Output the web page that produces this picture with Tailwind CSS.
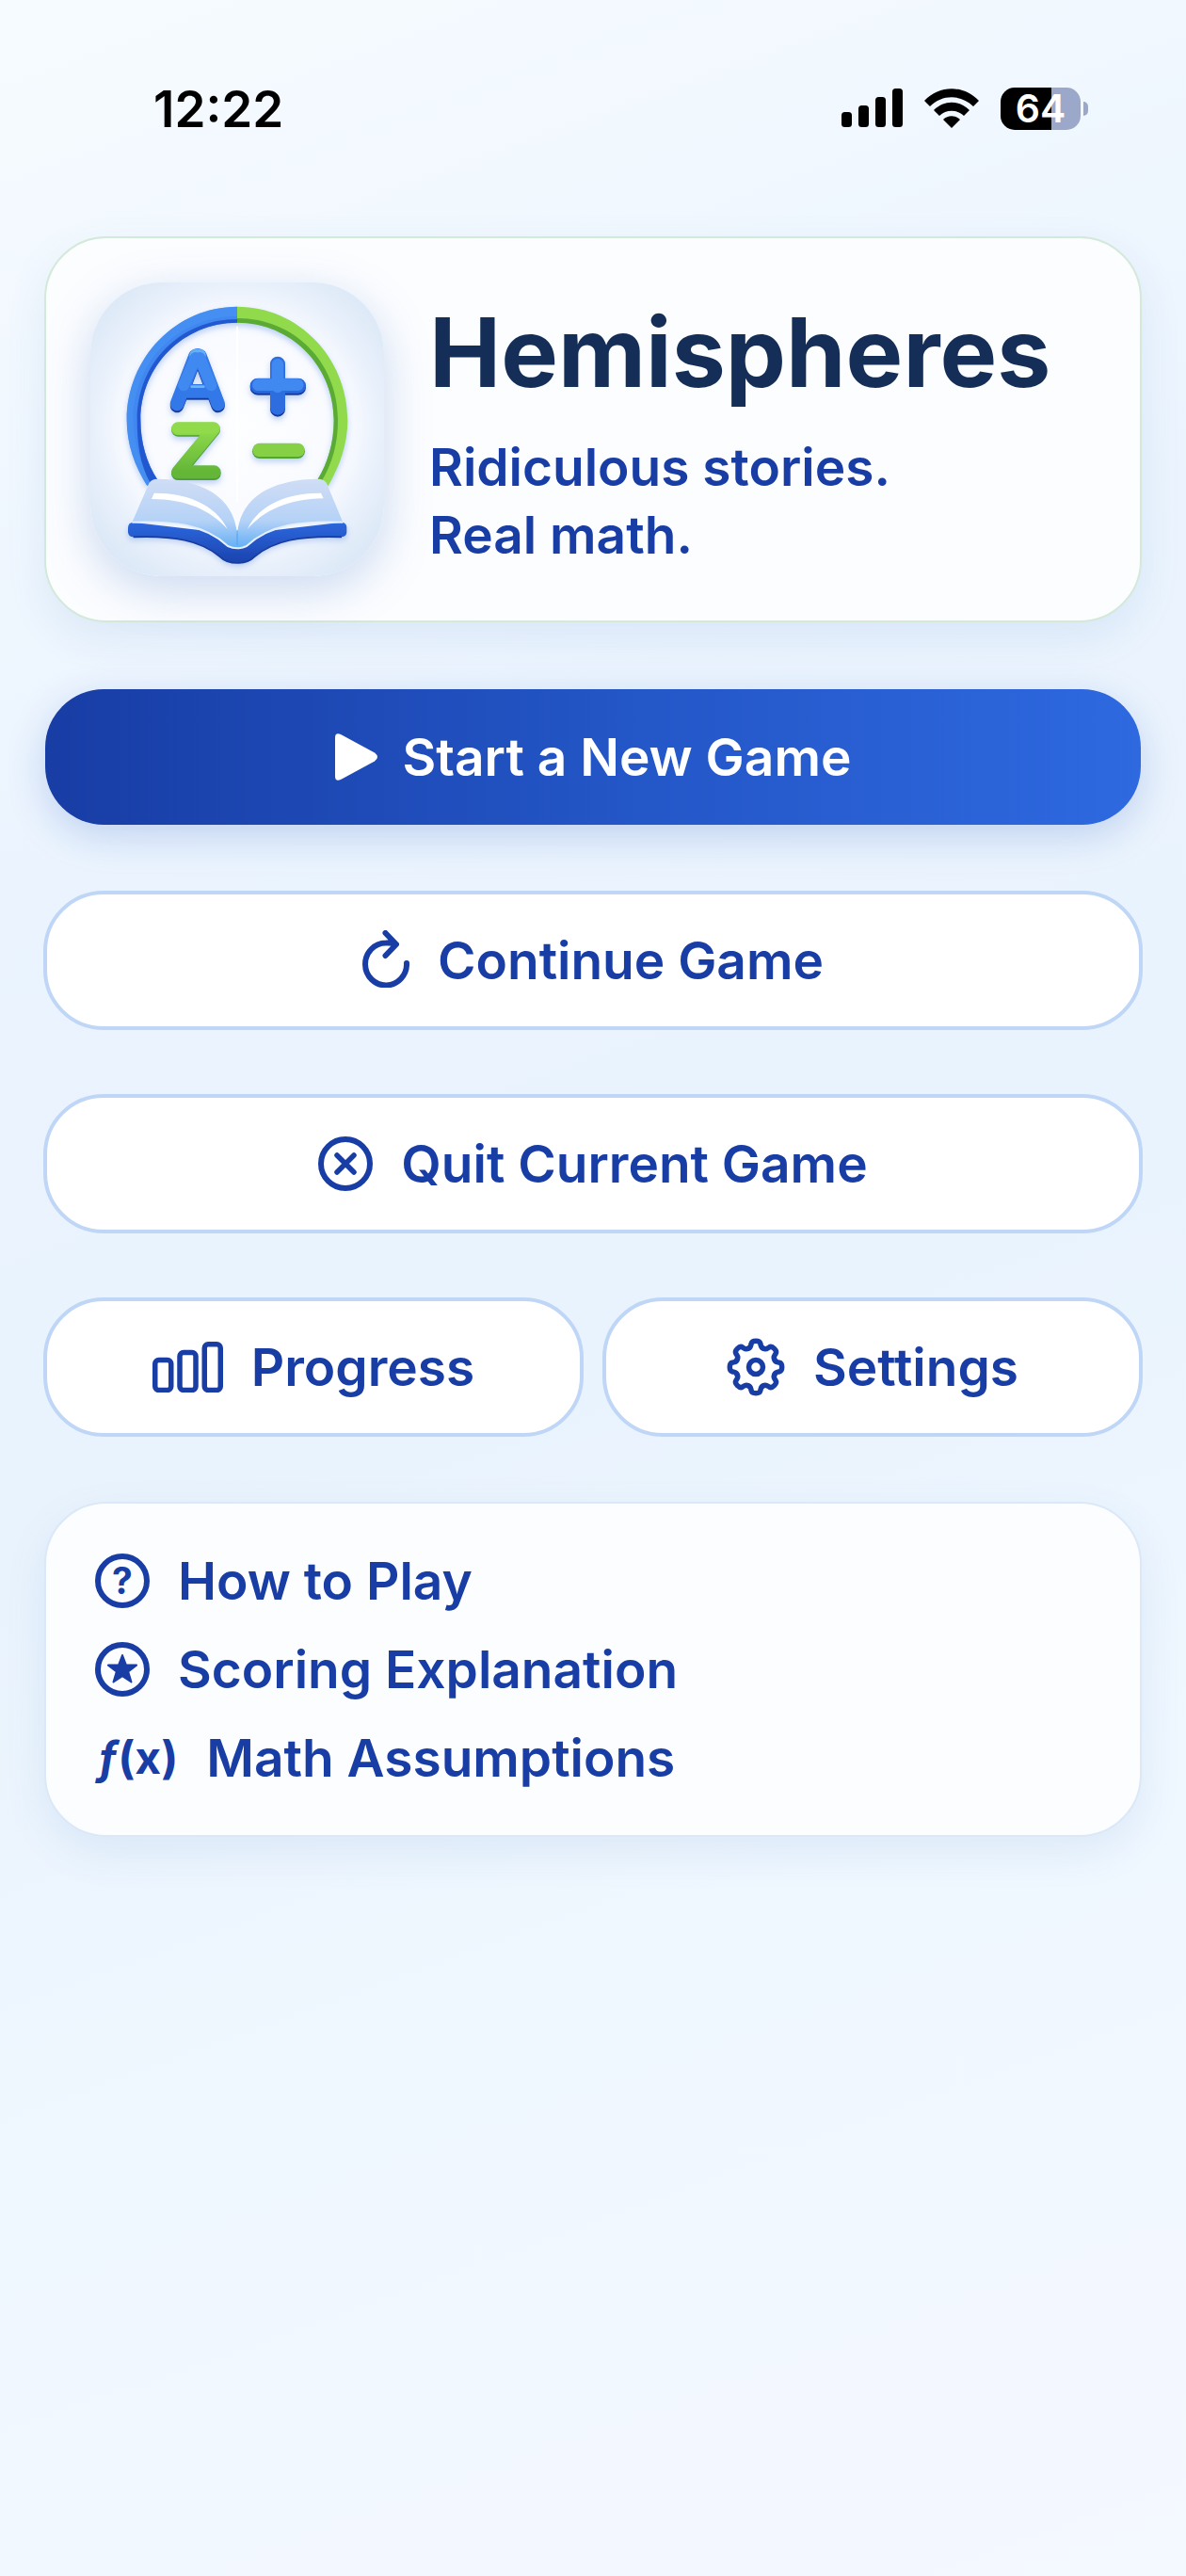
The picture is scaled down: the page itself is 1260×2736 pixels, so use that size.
<!DOCTYPE html>
<html lang="en">

<head>
    <meta charset="UTF-8">
    <meta name="viewport" content="width=device-width, initial-scale=1.0">
    <title>Hemispheres</title>
    <script src="https://cdn.jsdelivr.net/npm/@tailwindcss/browser@4"></script>
</head>

<body class="min-h-screen bg-linear-[160deg,#f6fbff,#ebf4fe_30%,#e9f3fd_52%,#eff7ff_72%,#f4f8ff] font-['Inter',sans-serif] font-semibold text-[#183da5]">

    <!-- Status bar -->
    <header class="flex h-[229px] items-start justify-between pt-[84px] pr-[104px] pl-[163px] text-black">
        <time class="text-[53px] leading-[64px]">12:22</time>
        <div class="flex h-[62px] items-center gap-[23px]">
            <svg class="h-[42px] w-[65px]" viewBox="0 0 65 42" aria-label="Signal">
                <rect x="0" y="25" width="11" height="16" rx="3.5" />
                <rect x="18" y="18" width="11" height="23" rx="3.5" />
                <rect x="36" y="9" width="11" height="32" rx="3.5" />
                <rect x="54" y="0" width="11" height="41" rx="3.5" />
            </svg>
            <svg class="h-[42px] w-[58px]" viewBox="0 0 58 42" aria-label="Wi-Fi">
                <path d="M0 13C16-4 42-4 58 13L52 19C39 6 19 6 6 19Z" />
                <path d="M10 23C21 12 37 12 48 23L42 29C35 22 23 22 16 29Z" />
                <path d="M20 33C25 28 33 28 38 33L29 42Z" />
            </svg>
            <div class="flex items-center gap-[3px]">
                <div class="flex h-[45px] w-[85px] items-center justify-center rounded-[15px] bg-linear-[90deg,#000_64%,#9ba8c9_64%] text-[41px] leading-[45px] text-white">64</div>
                <div class="h-[15px] w-[5px] rounded-r-full bg-[#9ba8c9]"></div>
            </div>
        </div>
    </header>

    <main class="flex flex-col gap-[68px] px-[46px] pt-[22px]">

        <!-- Title card -->
        <section class="mx-px mb-[3px] flex items-center gap-[48px] rounded-[66px] border-2 border-[#d3e9da] bg-[#fcfdff] px-[47px] py-[47px] shadow-[0_16px_44px_rgba(60,120,190,0.1)]">
            <svg class="size-[312px] shrink-0 rounded-[76px] shadow-[0_14px_50px_rgba(90,135,205,0.3)]" viewBox="47 60 936 936" role="img" aria-label="Hemispheres logo">
                <defs>
                    <radialGradient id="tile" cx="0.5" cy="0.49" r="0.66">
                        <stop offset="0" stop-color="#fdfeff" />
                        <stop offset="0.58" stop-color="#f8faff" />
                        <stop offset="0.74" stop-color="#e8f0fb" />
                        <stop offset="1" stop-color="#d7e5f5" />
                    </radialGradient>
                    <linearGradient id="green" x1="0" y1="0" x2="0" y2="1">
                        <stop offset="0" stop-color="#90da4b" />
                        <stop offset="1" stop-color="#64b638" />
                    </linearGradient>
                    <linearGradient id="page" x1="0" y1="0" x2="0" y2="1">
                        <stop offset="0" stop-color="#d0ddf5" />
                        <stop offset="0.6" stop-color="#b5d2f7" />
                        <stop offset="1" stop-color="#62aef5" />
                    </linearGradient>
                    <linearGradient id="cover" x1="0" y1="0" x2="0" y2="1">
                        <stop offset="0" stop-color="#2c68de" />
                        <stop offset="1" stop-color="#1b43ae" />
                    </linearGradient>
                    <filter id="soft" x="-20%" y="-20%" width="140%" height="150%">
                        <feDropShadow dx="0" dy="10" stdDeviation="9" flood-color="#7ba3e6" flood-opacity="0.5" />
                    </filter>
                </defs>
                <rect x="47" y="60" width="936" height="936" fill="url(#tile)" />

                <!-- Ring -->
                <g filter="url(#soft)">
                    <path d="M515 137C320 137 163 300 163 498C163 575 188 645 228 708L262 690C226 635 207 570 207 498C207 326 343 188 515 188Z" fill="#3f87f1" />
                    <path d="M163 498C163 575 188 645 228 708L245 699C206 640 184 572 184 498C184 308 330 168 515 168L515 137C320 137 163 300 163 498Z" fill="#4c95f4" opacity="0.5" />
                    <path d="M515 188C343 188 207 326 207 498C207 570 226 635 262 690L240 702C204 640 196 570 196 498C196 316 335 177 515 177Z" fill="#2459cf" />
                    <path d="M515 137C710 137 867 300 867 498C867 575 842 645 805 708L770 690C804 635 823 570 823 498C823 326 687 188 515 188Z" fill="#90da4b" />
                    <path d="M515 188C687 188 823 326 823 498C823 570 804 635 770 690L782 697C820 635 836 570 836 498C836 312 695 174 515 174Z" fill="#5aaa35" />
                </g>
                <path d="M515 200V760" stroke="#fff" stroke-width="6" />

                <!-- A, Z, plus and minus -->
                <g filter="url(#soft)" fill="none" stroke-linecap="round" stroke-linejoin="round">
                    <path d="M323 453L382 298Q389 294 396 298L454 453M345 412H432" stroke="#173b9e" stroke-width="44" />
                    <path d="M323 447L382 294Q389 290 396 294L454 447M345 406H432" stroke="#3278e8" stroke-width="44" />
                    <path d="M382 292Q389 290 396 292" stroke="#62b0f8" stroke-width="38" />
                    <path d="M344 388L382 300M396 300L432 388" stroke="#4089f1" stroke-width="36" />
                    <path d="M370 392H408" stroke="#69b5f8" stroke-width="8" />
                    <path d="M644 326V464M580 395H710" stroke="#173b9e" stroke-width="48" />
                    <path d="M580 389H710" stroke="#2c66dc" stroke-width="48" />
                    <path d="M644 320V458" stroke="#2e6de0" stroke-width="48" />
                    <path d="M644 322V392M582 386H708" stroke="#4089f1" stroke-width="38" />
                    <path d="M326 530H440L326 669H442" stroke="#4c9e30" stroke-width="42" />
                    <path d="M326 526H440L326 664H442" stroke="url(#green)" stroke-width="42" />
                    <path d="M326 524H440" stroke="#90da4b" stroke-width="36" />
                    <path d="M586 598H708" stroke="#4c9e30" stroke-width="46" />
                    <path d="M586 594H708" stroke="#86d044" stroke-width="44" />
                </g>

                <!-- Book -->
                <path d="M182 824Q167 826 167 842V856Q168 871 184 871C310 866 400 882 460 934Q480 954 515 954Q550 954 570 934C630 882 720 866 848 871Q864 870 864 855V840Q864 826 848 824L630 850L515 890L400 850Z" fill="url(#cover)" filter="url(#soft)" />
                <path d="M184 871C310 866 400 882 460 934Q480 954 515 954Q550 954 570 934C630 882 720 866 848 871" fill="none" stroke="#173b9e" stroke-width="5" />
                <path d="M234 700Q240 686 262 686C400 688 505 740 515 862C525 740 630 688 770 686Q794 686 800 700L852 824C720 820 620 830 545 900Q515 914 485 900C410 830 310 820 180 824Z" fill="url(#page)" />
                <path d="M180 824C310 820 410 830 485 900Q515 914 545 900C620 830 720 820 852 824" fill="none" stroke="#e5effd" stroke-width="6" />
                <path d="M515 850V898" stroke="#58a8f4" stroke-width="4" />
                <path d="M250 731C350 730 445 765 484 846C430 785 350 750 242 750Z" fill="#fff" />
                <path d="M782 731C680 730 585 765 548 846C600 785 680 750 790 748Z" fill="#fff" />
            </svg>
            <div>
                <h1 class="text-[102px] leading-[132px] font-bold text-[#142e57]">Hemispheres</h1>
                <p class="mt-5 text-[55px] leading-[72px]">Ridiculous stories.<br>Real math.</p>
            </div>
        </section>

        <!-- Game actions -->
        <button type="button" class="mx-0.5 mb-0.5 flex h-36 items-center justify-center gap-[27px] rounded-[62px] bg-linear-[90deg,#183da5,#2457c8_55%,#2e69e0] text-[55px] text-white shadow-[0_12px_40px_rgba(40,90,190,0.22)]">
            <svg class="h-[50px] w-[45px]" viewBox="0 0 45 50" fill="currentColor" aria-hidden="true">
                <path d="M0 4.500Q0-1.500 6 1L42 20.500Q48 25 42 29.500L6 49Q0 51.500 0 45.500Z" />
            </svg>
            Start a New Game
        </button>

        <button type="button" class="flex h-[148px] items-center justify-center gap-[30px] rounded-[64px] border-4 border-[#bfd6f7] bg-white text-[55px]">
            <svg class="mb-1 h-[61px] w-[50px]" viewBox="0 0 50 61" fill="none" stroke="currentColor" stroke-width="6" stroke-linecap="round" stroke-linejoin="round" aria-hidden="true">
                <path d="M47 35A22 22.500 0 1 1 25 13.500Q31 13 36 15M24.500 3L36 15L24.500 27" />
            </svg>
            Continue Game
        </button>

        <button type="button" class="flex h-[148px] items-center justify-center gap-[30px] rounded-[64px] border-4 border-[#bfd6f7] bg-white text-[55px]">
            <svg class="size-[58px]" viewBox="0 0 58 58" fill="none" stroke="currentColor" stroke-width="6" stroke-linecap="round" aria-hidden="true">
                <circle cx="29" cy="29" r="26" />
                <path d="M20 20L38 38M38 20L20 38" stroke-width="5.500" />
            </svg>
            Quit Current Game
        </button>

        <div class="grid grid-cols-2 gap-5">
            <button type="button" class="flex h-[148px] items-center justify-center gap-[30px] rounded-[64px] border-4 border-[#bfd6f7] bg-white text-[55px]">
                <svg class="h-[54px] w-[75px]" viewBox="0 0 75 54" fill="none" stroke="currentColor" stroke-width="5.500" aria-hidden="true">
                    <rect x="2.750" y="19.500" width="17" height="32" rx="4" />
                    <rect x="29" y="11.500" width="17" height="40" rx="4" />
                    <rect x="55.250" y="2.750" width="17" height="48.750" rx="4" />
                </svg>
                Progress
            </button>
            <button type="button" class="flex h-[148px] items-center justify-center gap-[30px] rounded-[64px] border-4 border-[#bfd6f7] bg-white text-[55px]">
                <svg class="size-[62px]" viewBox="-31 -31 62 62" fill="none" stroke="currentColor" stroke-width="5.500" stroke-linecap="round" aria-hidden="true">
                    <circle r="7.500" />
                    <path id="tooth" d="M-8.200-19.800C-5-20.500-5.500-23-4.800-25C-4-28.600 4-28.600 4.800-25C5.500-23 5-20.500 8.200-19.800" />
                    <use href="#tooth" transform="rotate(45)" />
                    <use href="#tooth" transform="rotate(90)" />
                    <use href="#tooth" transform="rotate(135)" />
                    <use href="#tooth" transform="rotate(180)" />
                    <use href="#tooth" transform="rotate(225)" />
                    <use href="#tooth" transform="rotate(270)" />
                    <use href="#tooth" transform="rotate(315)" />
                </svg>
                Settings
            </button>
        </div>

        <!-- Help links -->
        <nav class="mx-px mt-px flex flex-col items-start gap-[22px] rounded-[66px] border-2 border-[#dbe8f7] bg-[#fcfdff] px-[52px] py-[46px] text-[55px] leading-[72px] shadow-[0_16px_44px_rgba(60,120,190,0.1)]">
            <a href="#how-to-play" class="flex items-center gap-[30px]">
                <svg class="size-[58px]" viewBox="0 0 58 58" aria-hidden="true">
                    <circle cx="29" cy="29" r="26" fill="none" stroke="currentColor" stroke-width="6" />
                    <text x="29" y="43" text-anchor="middle" font-size="39" font-weight="700" fill="currentColor">?</text>
                </svg>
                How to Play
            </a>
            <a href="#scoring" class="flex items-center gap-[30px]">
                <svg class="size-[58px]" viewBox="0 0 58 58" aria-hidden="true">
                    <circle cx="29" cy="29" r="26" fill="none" stroke="currentColor" stroke-width="6" />
                    <path d="M29 14L32.800 24.200L44 24.600L35.200 31.500L38.500 42.500L29 36.200L19.500 42.500L22.800 31.500L14 24.600L25.200 24.200Z" fill="currentColor" stroke="currentColor" stroke-width="2" stroke-linejoin="round" />
                </svg>
                Scoring Explanation
            </a>
            <a href="#math" class="flex items-center gap-[30px] pl-0.5">
                <span class="text-[48px] font-bold" aria-hidden="true"><i>ƒ</i>(x)</span>
                Math Assumptions
            </a>
        </nav>
    </main>

</body>

</html>
